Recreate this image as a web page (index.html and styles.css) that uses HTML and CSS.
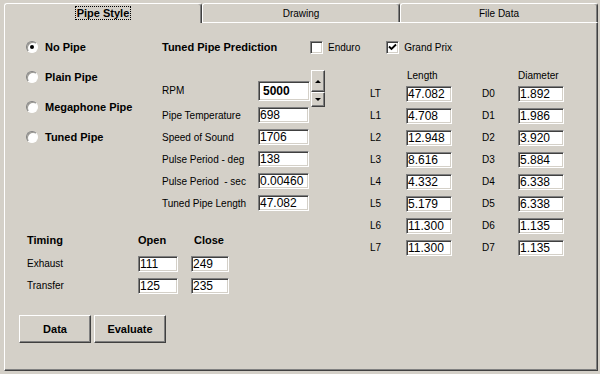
FILE: index.html
```html
<!DOCTYPE html>
<html lang="en">
<head>
    <meta charset="UTF-8">
    <meta name="viewport" content="width=device-width, initial-scale=1.0">
    <title>Pipe Style</title>
    <link rel="stylesheet" href="styles.css">
</head>
<body>
    <div class="window">
        <div class="tabs">
            <div class="tab active"><span class="focus">Pipe Style</span></div>
            <div class="tab">Drawing</div>
            <div class="tab last">File Data</div>
        </div>

        <div class="panel">
            <!-- pipe type -->
            <div class="styles">
                <div class="radio checked"><span class="radio-mark"></span>No Pipe</div>
                <div class="radio"><span class="radio-mark"></span>Plain Pipe</div>
                <div class="radio"><span class="radio-mark"></span>Megaphone Pipe</div>
                <div class="radio"><span class="radio-mark"></span>Tuned Pipe</div>
            </div>

            <div class="predict-head">
                <span class="heading">Tuned Pipe Prediction</span>
                <span class="check enduro"><span class="box"></span>Enduro</span>
                <span class="check grand-prix">
                    <span class="box">
                        <svg width="9" height="9" viewBox="0 0 9 9"><path d="M1 3.5 L3.5 6 L8 1.5" fill="none" stroke="#000" stroke-width="1.8"/></svg>
                    </span>Grand Prix
                </span>
            </div>

            <!-- prediction inputs -->
            <div class="predict">
                <div class="rpm-row">
                    <span class="label">RPM</span>
                    <input class="field rpm" value="5000">
                    <div class="spin">
                        <div class="spin-btn up"><span class="arrow-up"></span></div>
                        <div class="spin-btn down"><span class="arrow-down"></span></div>
                    </div>
                </div>
                <div class="row"><span class="label">Pipe Temperature</span><input class="field" value="698"></div>
                <div class="row"><span class="label">Speed of Sound</span><input class="field" value="1706"></div>
                <div class="row"><span class="label">Pulse Period - deg</span><input class="field" value="138"></div>
                <div class="row"><span class="label">Pulse Period &nbsp;- sec</span><input class="field" value="0.00460"></div>
                <div class="row"><span class="label">Tuned Pipe Length</span><input class="field" value="47.082"></div>
            </div>

            <!-- length / diameter table -->
            <div class="dims">
                <div class="dims-head">
                    <span class="col-l">Length</span>
                    <span class="col-d">Diameter</span>
                </div>
                <div class="dims-grid">
                    <span>LT</span><input class="field" value="47.082"><span>D0</span><input class="field" value="1.892">
                    <span>L1</span><input class="field" value="4.708"><span>D1</span><input class="field" value="1.986">
                    <span>L2</span><input class="field" value="12.948"><span>D2</span><input class="field" value="3.920">
                    <span>L3</span><input class="field" value="8.616"><span>D3</span><input class="field" value="5.884">
                    <span>L4</span><input class="field" value="4.332"><span>D4</span><input class="field" value="6.338">
                    <span>L5</span><input class="field" value="5.179"><span>D5</span><input class="field" value="6.338">
                    <span>L6</span><input class="field" value="11.300"><span>D6</span><input class="field" value="1.135">
                    <span>L7</span><input class="field" value="11.300"><span>D7</span><input class="field" value="1.135">
                </div>
            </div>

            <!-- port timing -->
            <div class="timing">
                <span class="bold">Timing</span>
                <span class="bold">Open</span>
                <span class="bold close-head">Close</span>
                <span class="t-label">Exhaust</span>
                <input class="field open" value="111">
                <input class="field shut" value="249">
                <span class="t-label">Transfer</span>
                <input class="field open" value="125">
                <input class="field shut" value="235">
            </div>

            <div class="actions">
                <div class="button">Data</div>
                <div class="button">Evaluate</div>
            </div>
        </div>
    </div>
</body>
</html>
```

FILE: styles.css
```css
body {
    margin: 0;
    background: #d4d0c8;
    font-family: 'Liberation Sans', Arial, sans-serif;
    font-size: 10px;
    color: #000;
}

.window {
    height: 374px;
    box-sizing: border-box;
    padding: 3px 2px 3px 4px;
    display: flex;
    flex-direction: column;
}

/* tab strip */
.tabs {
    display: flex;
    align-items: flex-end;
    height: 19px;
}

.tab {
    width: 198px;
    height: 19px;
    box-sizing: border-box;
    border-top: 1px solid #fff;
    border-left: 1px solid #fff;
    border-right: 1px solid #404040;
    box-shadow: inset -1px 0 #808080;
    border-radius: 3px 3px 0 0;
    text-align: center;
    line-height: 19px;
}

.tab.last {
    flex: 1;
}

.tab.active {
    height: 20px;
    margin-bottom: -1px;
    position: relative;
    z-index: 1;
    background: #d4d0c8;
    line-height: 18px;
}

.focus {
    display: inline-block;
    font-size: 11px;
    font-weight: bold;
    line-height: 12px;
    padding: 0 1px;
    border: 1px dotted #000;
    vertical-align: middle;
}

/* panel body */
.panel {
    flex: 1;
    border-top: 1px solid #fff;
    border-left: 1px solid #fff;
    border-right: 1px solid #404040;
    border-bottom: 1px solid #404040;
    box-shadow: inset -1px -1px #808080;
    padding: 17px 0 0 14px;
    display: grid;
    grid-template-columns: 143px 208px 1fr;
    grid-template-rows: auto auto auto auto;
    align-content: start;
}

.styles {
    grid-column: 1;
    grid-row: 1 / 3;
    padding-left: 7px;
}

.radio {
    display: flex;
    align-items: center;
    gap: 7px;
    height: 14px;
    font-size: 11px;
    font-weight: bold;
}

.radio + .radio {
    margin-top: 16px;
}

.radio-mark {
    position: relative;
    width: 12px;
    height: 12px;
    box-sizing: border-box;
    border-radius: 50%;
    background: #fff;
    border: 1px solid;
    border-color: #808080 #fff #fff #808080;
    box-shadow: inset 1px 1px #9c9a94;
}

.radio.checked .radio-mark::after {
    content: "";
    position: absolute;
    left: 3px;
    top: 3px;
    width: 4px;
    height: 4px;
    border-radius: 50%;
    background: #000;
}

.predict-head {
    grid-column: 2 / 4;
    grid-row: 1;
    display: flex;
    align-items: center;
    height: 14px;
}

.heading {
    width: 148px;
    font-size: 11px;
    font-weight: bold;
}

.check {
    display: flex;
    align-items: center;
    gap: 5px;
}

.grand-prix {
    margin-left: 26px;
}

.box {
    width: 13px;
    height: 13px;
    box-sizing: border-box;
    background: #fff;
    border: 1px solid;
    border-color: #808080 #fff #fff #808080;
    box-shadow: inset 1px 1px #404040, inset -1px -1px #d4d0c8;
    display: flex;
    align-items: center;
    justify-content: center;
}

.predict {
    grid-column: 2;
    grid-row: 2;
    margin-top: 16px;
}

.rpm-row {
    display: flex;
    align-items: flex-start;
}

.rpm-row .label {
    margin-top: 14px;
    line-height: 14px;
}

.row {
    display: flex;
    align-items: center;
    height: 16px;
}

.row + .row {
    margin-top: 6px;
}

.label {
    width: 96px;
}

.field {
    box-sizing: border-box;
    width: 51px;
    height: 16px;
    margin: 0;
    padding: 0 1px;
    font-family: 'Liberation Sans', Arial, sans-serif;
    font-size: 12px;
    color: #000;
    background: #fff;
    border: 1px solid;
    border-color: #808080 #fff #fff #808080;
    box-shadow: inset 1px 1px #404040, inset -1px -1px #d4d0c8;
    outline: none;
}

.field.rpm {
    width: 52px;
    height: 20px;
    margin-top: 11px;
    padding-left: 4px;
    font-weight: bold;
}

.spin {
    display: flex;
    flex-direction: column;
    margin-left: 1px;
}

.spin-btn {
    width: 14px;
    box-sizing: border-box;
    border: 1px solid;
    border-color: #fff #404040 #404040 #fff;
    box-shadow: inset -1px -1px #808080;
    display: flex;
    align-items: center;
    justify-content: center;
}

.spin-btn.up {
    height: 22px;
}

.spin-btn.down {
    height: 15px;
}

.arrow-up {
    border-left: 3px solid transparent;
    border-right: 3px solid transparent;
    border-bottom: 3px solid #000;
}

.arrow-down {
    border-left: 3px solid transparent;
    border-right: 3px solid transparent;
    border-top: 3px solid #000;
}

/* length and diameter */
.dims {
    grid-column: 3;
    grid-row: 2 / 4;
    margin-top: 15px;
}

.dims-head,
.dims-grid {
    display: grid;
    grid-template-columns: 36px 76px 36px 46px;
}

.dims-head {
    height: 14px;
    line-height: 14px;
    margin-bottom: 3px;
}

.dims-head .col-l {
    grid-column: 2;
    padding-left: 1px;
}

.dims-head .col-d {
    grid-column: 4;
}

.dims-grid {
    grid-auto-rows: 16px;
    row-gap: 6px;
    align-items: center;
}

.dims-grid .field {
    width: 46px;
}

.dims-grid span {
    margin-top: -2px;
}

/* timing */
.timing {
    grid-column: 1 / 3;
    grid-row: 3;
    margin-top: 22px;
    padding-left: 8px;
    display: grid;
    grid-template-columns: 111px 53px 38px;
    grid-template-rows: 17px 16px 16px;
    row-gap: 6px;
}

.bold {
    font-size: 11px;
    font-weight: bold;
    line-height: 14px;
}

.close-head {
    padding-left: 3px;
}

.t-label {
    align-self: center;
    margin-top: -2px;
}

.field.open {
    width: 40px;
}

.field.shut {
    width: 38px;
}

/* buttons */
.actions {
    grid-column: 1 / 3;
    grid-row: 4;
    margin-top: 21px;
    display: flex;
    gap: 3px;
}

.button {
    width: 72px;
    height: 28px;
    box-sizing: border-box;
    border: 1px solid;
    border-color: #fff #404040 #404040 #fff;
    box-shadow: inset -1px -1px #808080;
    font-size: 11px;
    font-weight: bold;
    display: flex;
    align-items: center;
    justify-content: center;
}
```
